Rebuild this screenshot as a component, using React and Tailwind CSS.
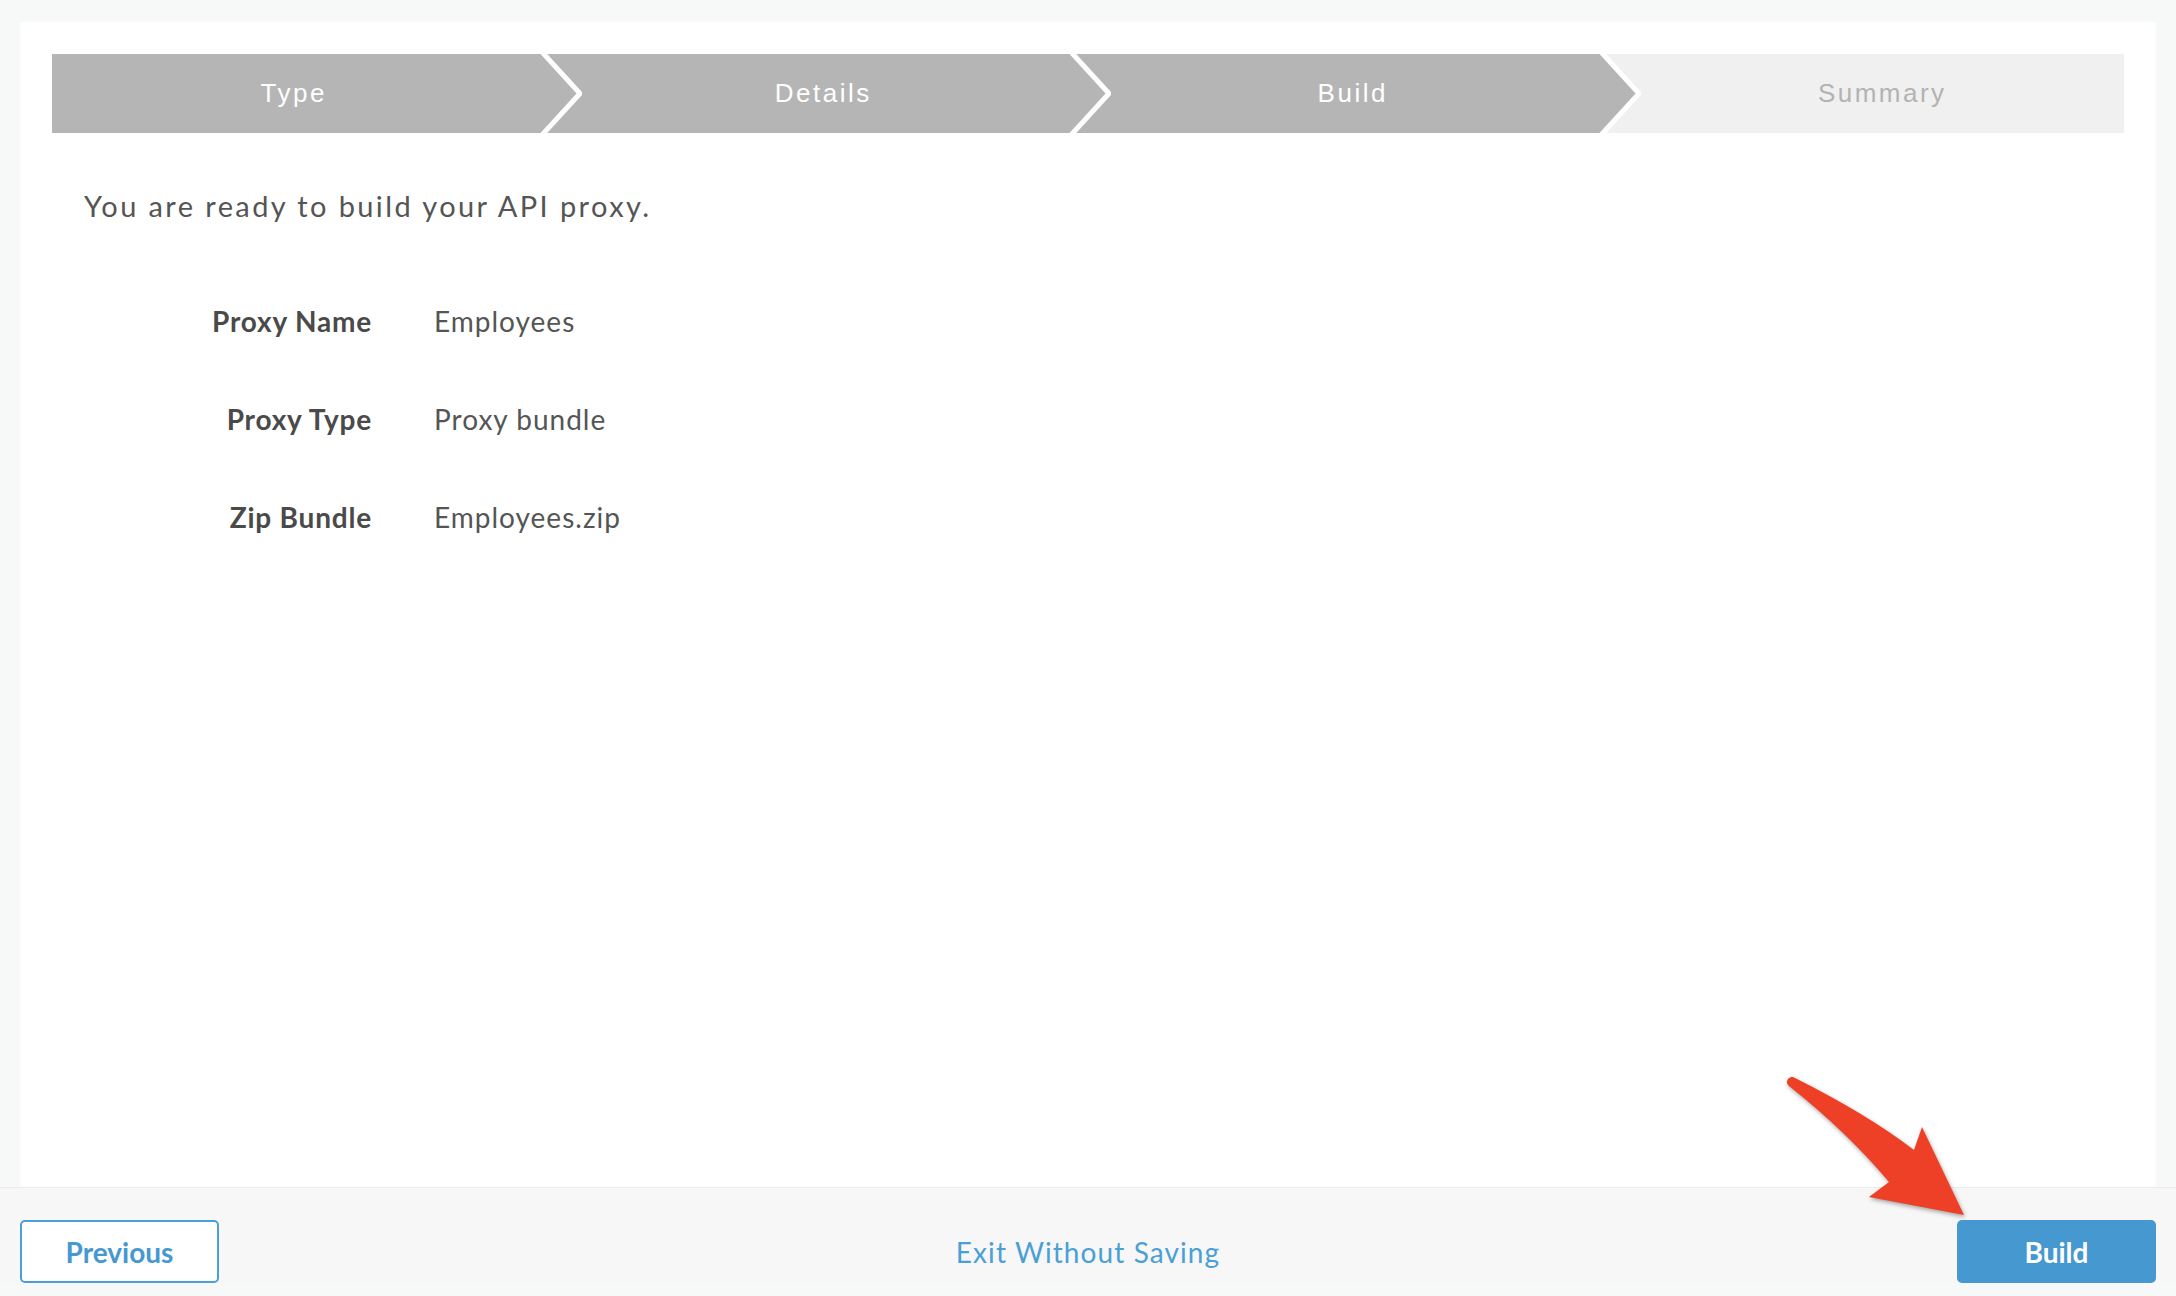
import React from 'react';

const steps = [
  { label: 'Type', done: true },
  { label: 'Details', done: true },
  { label: 'Build', done: true },
  { label: 'Summary', done: false },
];

const rows = [
  { label: 'Proxy Name', value: 'Employees' },
  { label: 'Proxy Type', value: 'Proxy bundle' },
  { label: 'Zip Bundle', value: 'Employees.zip' },
];

const lato = { fontFamily: 'Lato, "Open Sans", sans-serif' };

const Chevron = ({ prev, next }) => (
  <svg width="46" height="79" viewBox="0 0 46 79" className="block shrink-0">
    <rect x="0" y="0" width="46" height="79" fill={next} />
    <polygon points="0,0 6,0 44,39.5 6,79 0,79" fill={prev} />
    <polyline points="6,-2 44,39.5 6,81" fill="none" stroke="#ffffff" strokeWidth="5" />
  </svg>
);

const Stepper = () => (
  <div className="flex h-[79px] w-full">
    {steps.map((s, i) => (
      <React.Fragment key={s.label}>
        {i > 0 && (
          <Chevron
            prev={steps[i - 1].done ? '#b5b5b5' : '#f0f0f0'}
            next={s.done ? '#b5b5b5' : '#f0f0f0'}
          />
        )}
        <div
          className={`flex flex-1 items-center justify-center text-[26px] tracking-[2.5px] ${
            s.done ? 'bg-[#b5b5b5] text-white' : 'bg-[#f0f0f0] text-[#b3b3b3]'
          }`}
          style={{ fontFamily: '"Liberation Sans", Arial, sans-serif' }}
        >
          {s.label}
        </div>
      </React.Fragment>
    ))}
  </div>
);

const Arrow = () => (
  <svg
    width="220"
    height="180"
    viewBox="0 0 220 180"
    className="pointer-events-none absolute left-[1772px] top-[1062px]"
    style={{ filter: 'drop-shadow(1px 2px 2px rgba(0,0,0,0.35))' }}
  >
    <path
      d="M 23 16 Q 95 52 142 88 L 150 65 L 192 153 L 97 135 L 117 120 Q 75 70 17 24 A 4.5 4.5 0 0 1 23 16 Z"
      fill="#ee4027"
    />
  </svg>
);

export default function App() {
  return (
    <div className="relative h-[1296px] w-full overflow-hidden bg-[#f7f8f8]" style={lato}>
      <div className="mx-[20px] pt-[22px]">
        <div className="h-[1165px] bg-white px-[32px] pt-[32px]">
          <Stepper />
          <p className="ml-[32px] mt-[56px] text-[29px] leading-[34px] tracking-[2.4px] text-[#555555]">
            You are ready to build your API proxy.
          </p>
          <div className="mt-[81px] flex flex-col gap-[64px]">
            {rows.map((r) => (
              <div key={r.label} className="flex h-[34px] items-center text-[28px] leading-[34px]">
                <div className="w-[320px] text-right font-bold tracking-[0.8px] text-[#4a4a4a]">
                  {r.label}
                </div>
                <div className="ml-[62px] tracking-[1px] text-[#555555]">{r.value}</div>
              </div>
            ))}
          </div>
        </div>
      </div>
      <div className="border-t border-[#ececec] bg-[#f7f7f7] px-[20px] pt-[32px]">
        <div className="relative flex h-[63px] items-center justify-between">
          <button className="h-[63px] w-[199px] rounded-[5px] border-2 border-[#4a9fd8] bg-white text-[28px] font-bold text-[#4599d0]">
            Previous
          </button>
          <a className="absolute left-1/2 -translate-x-1/2 text-[28px] tracking-[1.1px] text-[#4aa0d5]">
            Exit Without Saving
          </a>
          <button className="h-[63px] w-[199px] rounded-[5px] bg-[#4699d0] text-[28px] font-bold text-white">
            Build
          </button>
        </div>
      </div>
      <Arrow />
    </div>
  );
}
